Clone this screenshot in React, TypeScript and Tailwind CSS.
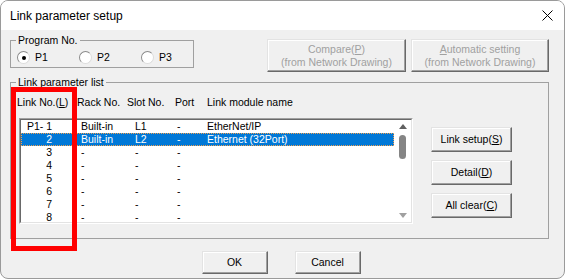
import React from 'react';

// Windows-classic style dialog: "Link parameter setup"

const FONT = { fontFamily: '"Liberation Sans", Arial, sans-serif' };

type Row = { no: string; rack: string; slot: string; port: string; name: string };

const ROWS: Row[] = [
  { no: 'P1- 1', rack: 'Built-in', slot: 'L1', port: '-', name: 'EtherNet/IP' },
  { no: '2', rack: 'Built-in', slot: 'L2', port: '-', name: 'Ethernet (32Port)' },
  { no: '3', rack: '-', slot: '-', port: '-', name: '' },
  { no: '4', rack: '-', slot: '-', port: '-', name: '' },
  { no: '5', rack: '-', slot: '-', port: '-', name: '' },
  { no: '6', rack: '-', slot: '-', port: '-', name: '' },
  { no: '7', rack: '-', slot: '-', port: '-', name: '' },
  { no: '8', rack: '-', slot: '-', port: '-', name: '' },
];

const SELECTED = 1;

// classic raised button look
const btn =
  'flex flex-col items-center justify-center bg-[#f0f0f0] border border-t-[#e3e3e3] border-l-[#e3e3e3] border-r-[#696969] border-b-[#696969] shadow-[inset_-1px_-1px_0_#a0a0a0,inset_1px_1px_0_#ffffff] leading-[13px]';

const Mn = ({ children }: { children: React.ReactNode }) => <span className="underline underline-offset-[1px]">{children}</span>;

const Radio = ({ label, checked }: { label: string; checked?: boolean }) => (
  <div className="flex items-center w-[62px] shrink-0">
    <span className="w-[13px] h-[13px] rounded-full bg-white border border-t-[#8a8a8a] border-l-[#8a8a8a] border-r-[#dcdcdc] border-b-[#dcdcdc] flex items-center justify-center">
      {checked && <span className="w-[4px] h-[4px] rounded-full bg-black" />}
    </span>
    <span className="ml-[5px]">{label}</span>
  </div>
);

export default function App() {
  return (
    <div className="w-[565px] h-[279px] bg-white" style={FONT}>
      <div className="relative w-[565px] h-[279px] bg-[#f0f0f0] border border-[#9a9a9a] rounded-[8px] overflow-hidden text-[10.5px] text-black">
        {/* --- Title bar --- */}
        <div className="h-[29px] bg-white flex items-center justify-between pl-[9px] pr-[11px]">
          <span className="text-[12px] text-black">Link parameter setup</span>
          <svg width="11" height="11" viewBox="0 0 11 11" className="mb-[1px]">
            <path d="M0.5 0.5 L10.5 10.5 M10.5 0.5 L0.5 10.5" stroke="#000" strokeWidth="1" />
          </svg>
        </div>

        <div className="pl-[9px]">
          {/* --- Top row --- */}
          <div className="flex items-start mt-[4px]">
            <fieldset className="w-[184px] min-w-0 h-[34px] border border-[#a0a0a0] overflow-hidden shrink-0">
              <legend className="ml-[5px] px-[2px] leading-[13px]">Program No.</legend>
              <div className="flex items-center pl-[6px] pt-[4px] h-[13px] box-content">
                <Radio label="P1" checked />
                <Radio label="P2" />
                <div className="flex items-center">
                  <span className="w-[13px] h-[13px] rounded-full bg-white border border-t-[#8a8a8a] border-l-[#8a8a8a] border-r-[#dcdcdc] border-b-[#dcdcdc]" />
                  <span className="ml-[5px]">P3</span>
                </div>
              </div>
            </fieldset>

            <div className="flex gap-[5px] ml-[73px] mt-[5px]">
              <div className={`${btn} w-[139px] h-[33px] text-[#a0a0a0]`}>
                <span>Compare(<Mn>P</Mn>)</span>
                <span>(from Network Drawing)</span>
              </div>
              <div className={`${btn} w-[138px] h-[33px] text-[#a0a0a0]`}>
                <span><Mn>A</Mn>utomatic setting</span>
                <span>(from Network Drawing)</span>
              </div>
            </div>
          </div>

          {/* --- Link parameter list --- */}
          <fieldset className="w-[539px] min-w-0 h-[163px] mt-[4px] border border-[#a0a0a0]">
            <legend className="ml-[5px] px-[2px] leading-[13px]">Link parameter list</legend>
            <div className="flex pl-[8px]">
              <div className="flex flex-col">
                <div className="flex h-[13px] leading-[13px] mt-[7px] -ml-[2px]">
                  <span className="w-[60px]">Link No.(<Mn>L</Mn>)</span>
                  <span className="w-[50px]">Rack No.</span>
                  <span className="w-[48px]">Slot No.</span>
                  <span className="w-[32px]">Port</span>
                  <span>Link module name</span>
                </div>

                {/* listbox */}
                <div className="mt-[9px] w-[394px] h-[106px] border border-t-[#a0a0a0] border-l-[#a0a0a0] border-r-white border-b-white">
                  <div className="flex h-full border border-t-[#696969] border-l-[#696969] border-r-[#e3e3e3] border-b-[#e3e3e3] bg-white">
                    <div className="flex-1 flex flex-col">
                      {ROWS.map((r, i) => (
                        <div
                          key={i}
                          className={`flex h-[13px] leading-[11px] border ${
                            i === SELECTED
                              ? 'bg-[#0078d7] text-white border-dotted border-[#f0a050]'
                              : 'border-transparent'
                          }`}
                        >
                          <span className="w-[30px] text-right">{r.no}</span>
                          <span className="ml-[29px] w-[54px]">{r.rack}</span>
                          <span className="w-[42px]">{r.slot}</span>
                          <span className="w-[30px]">{r.port}</span>
                          <span>{r.name}</span>
                        </div>
                      ))}
                    </div>
                    {/* scrollbar */}
                    <div className="w-[17px] flex flex-col items-center">
                      <div className="h-[13px] flex items-center justify-center">
                        <svg width="8" height="5" viewBox="0 0 8 5">
                          <path d="M4 0 L8 5 L0 5 Z" fill="#606060" />
                        </svg>
                      </div>
                      <div className="mt-[2px] w-[7px] h-[24px] rounded-full bg-[#858585]" />
                      <div className="flex-1" />
                      <div className="h-[13px] flex items-center justify-center">
                        <svg width="8" height="5" viewBox="0 0 8 5">
                          <path d="M0 0 L8 0 L4 5 Z" fill="#a0a0a0" />
                        </svg>
                      </div>
                    </div>
                  </div>
                </div>
              </div>

              <div className="flex flex-col gap-[8px] ml-[18px] pt-[38px]">
                <div className={`${btn} w-[81px] h-[25px]`}>
                  <span>Link setup(<Mn>S</Mn>)</span>
                </div>
                <div className={`${btn} w-[81px] h-[25px]`}>
                  <span>Detail(<Mn>D</Mn>)</span>
                </div>
                <div className={`${btn} w-[81px] h-[25px]`}>
                  <span>All clear(<Mn>C</Mn>)</span>
                </div>
              </div>
            </div>
          </fieldset>
        </div>

        {/* --- OK / Cancel --- */}
        <div className="flex justify-center gap-[27px] mt-[12px] pr-[3px]">
          <div className={`${btn} w-[66px] h-[23px]`}>OK</div>
          <div className={`${btn} w-[66px] h-[23px]`}>Cancel</div>
        </div>

        {/* red annotation frame */}
        <div className="absolute left-[10px] top-[86px] w-[66px] h-[164px] border-[5px] border-[#ff0000]" />
      </div>
    </div>
  );
}
